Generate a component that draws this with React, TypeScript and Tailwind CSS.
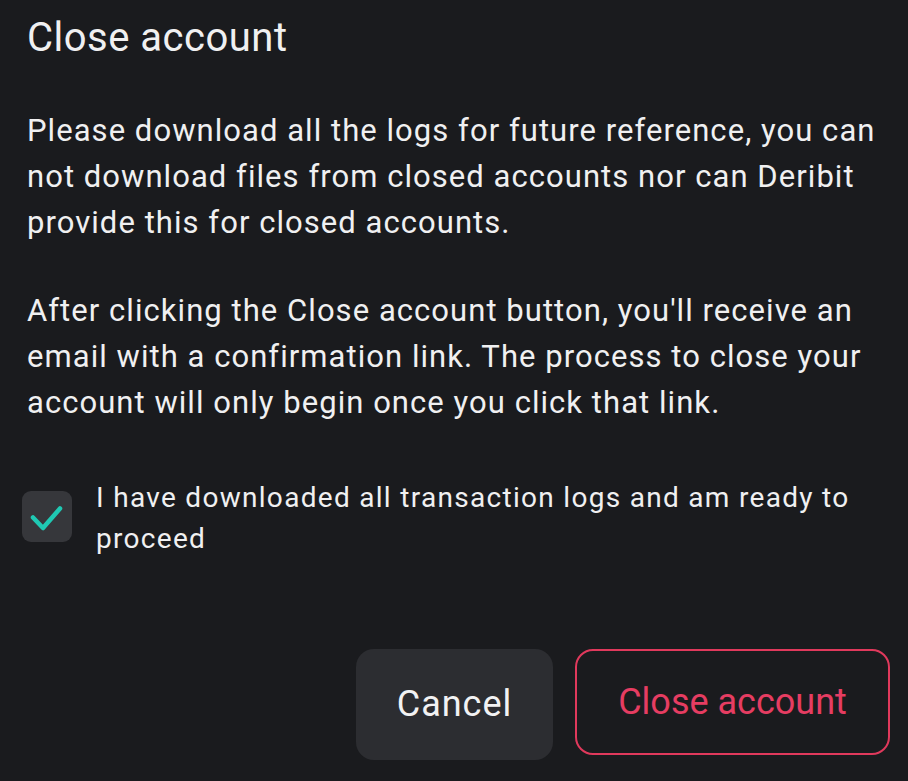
import React from "react";

export default function App() {
  return (
    <div className="w-[908px] h-[781px] bg-[#1a1b1e] text-[#f0f0f1] overflow-hidden" style={{ fontFamily: "Roboto, 'Noto Sans', sans-serif" }}>
      <div className="pl-[27px] pr-[20px] pt-[12px]">
        <h1 className="text-[40px] leading-[52px] font-normal tracking-[0.5px]">Close account</h1>
        <p className="mt-[44px] text-[31px] leading-[46px] tracking-[1.05px]">
          Please download all the logs for future reference, you can not download files from closed accounts nor can Deribit provide this for closed accounts.
        </p>
        <p className="mt-[42px] text-[31px] leading-[46px] tracking-[1.05px]">
          After clicking the Close account button, you'll receive an email with a confirmation link. The process to close your account will only begin once you click that link.
        </p>
      </div>
      <div className="flex items-start gap-[24px] pl-[22px] pr-[40px] mt-[51px]">
        <div className="mt-[14px] w-[50px] h-[51px] shrink-0 rounded-[9px] bg-[#36373b]">
          <svg width="50" height="51" viewBox="0 0 50 51" fill="none" stroke="#1fc9b3" strokeWidth="4.5" strokeLinecap="round" strokeLinejoin="round">
            <path d="M11 26.5L21 37L38 17.5" />
          </svg>
        </div>
        <p className="text-[28px] leading-[41px] tracking-[1.3px]">I have downloaded all transaction logs and am ready to proceed</p>
      </div>
      <div className="flex justify-end items-start gap-[22px] pr-[18px] mt-[90px]">
        <button className="w-[197px] h-[111px] rounded-[18px] bg-[#2c2d31] text-[36px] tracking-[1px] text-[#f2f2f3] pb-[2px]">Cancel</button>
        <button className="w-[315px] h-[106px] rounded-[18px] border-2 border-[#e0395c] text-[36px] text-[#e63d62]">Close account</button>
      </div>
    </div>
  );
}
